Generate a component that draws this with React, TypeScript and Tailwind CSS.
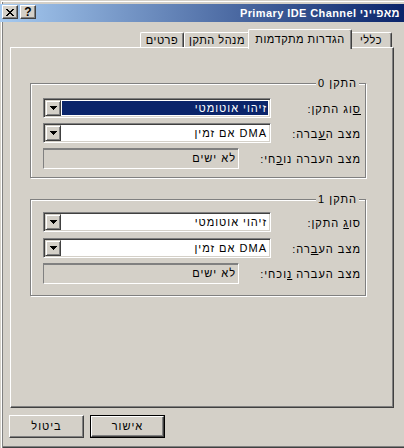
import React from 'react'

// classic win2k dialog, hebrew (rtl) – face #d4d0c8

function DropArrow() {
    return (
        <svg width="7" height="4" viewBox="0 0 7 4" shapeRendering="crispEdges">
            <rect x="0" y="0" width="7" height="1" fill="#000" />
            <rect x="1" y="1" width="5" height="1" fill="#000" />
            <rect x="2" y="2" width="3" height="1" fill="#000" />
            <rect x="3" y="3" width="1" height="1" fill="#000" />
        </svg>
    )
}

function CloseGlyph() {
    const px = [
        [0, 0], [1, 0], [6, 0], [7, 0],
        [1, 1], [2, 1], [5, 1], [6, 1],
        [2, 2], [3, 2], [4, 2], [5, 2],
        [3, 3], [4, 3],
        [2, 4], [3, 4], [4, 4], [5, 4],
        [1, 5], [2, 5], [5, 5], [6, 5],
        [0, 6], [1, 6], [6, 6], [7, 6],
    ]
    return (
        <svg width="8" height="7" viewBox="0 0 8 7" shapeRendering="crispEdges">
            {px.map(([x, y]) => (
                <rect key={`${x}-${y}`} x={x} y={y} width="1" height="1" fill="#000" />
            ))}
        </svg>
    )
}

function CaptionButton({ children }: { children: React.ReactNode }) {
    return (
        <div className="w-[16px] h-[14px] flex items-center justify-center bg-[#d4d0c8] border border-t-white border-l-white border-r-[#404040] border-b-[#404040] shadow-[inset_-1px_-1px_0_#808080]">
            {children}
        </div>
    )
}

function TitleBar() {
    return (
        <div className="h-[18px] flex justify-between bg-[linear-gradient(to_right,#a6caf0,#0a246a)]">
            <div className="flex gap-[2px] pl-[2px] pt-[1px]">
                <CaptionButton>
                    <CloseGlyph />
                </CaptionButton>
                <CaptionButton>
                    <span className="text-[12px] leading-none font-bold tracking-normal">?</span>
                </CaptionButton>
            </div>
            <div dir="rtl" className="pr-[4px] flex items-center text-white font-bold text-[11px] tracking-[0.4px]">
                מאפייני Primary IDE Channel
            </div>
        </div>
    )
}

function Tab({ label, w }: { label: string; w: string }) {
    return (
        <div
            dir="rtl"
            className={`${w} h-[15px] flex items-center justify-center pt-[1px] rounded-t-[2px] border-t border-l border-r border-t-white border-l-white border-r-[#404040] shadow-[inset_-1px_0_0_#808080]`}
        >
            {label}
        </div>
    )
}

function Tabs() {
    return (
        <div className="h-[18px] flex items-end justify-end pr-[2px] tracking-[0.5px]">
            <Tab label="פרטים" w="w-[44px]" />
            <Tab label="מנהל התקן" w="w-[66px]" />
            <div
                dir="rtl"
                className="relative z-10 w-[104px] h-[20px] -mx-[2px] -mb-[2px] bg-[#d4d0c8] flex justify-center pt-[3px] rounded-t-[2px] border-t border-l border-r border-t-white border-l-white border-r-[#404040] shadow-[inset_-1px_0_0_#808080]"
            >
                הגדרות מתקדמות
            </div>
            <Tab label="כללי" w="w-[42px]" />
        </div>
    )
}

function Combo({ value, selected }: { value: string; selected?: boolean }) {
    return (
        <div className="w-[228px] h-[20px] flex p-[1px] bg-white border border-t-[#808080] border-l-[#808080] border-b-white border-r-white shadow-[inset_1px_1px_0_#404040,inset_-1px_-1px_0_#d4d0c8]">
            <div className="w-[16px] h-full flex items-center justify-center bg-[#d4d0c8] border border-t-[#d4d0c8] border-l-[#d4d0c8] border-r-[#404040] border-b-[#404040] shadow-[inset_1px_1px_0_#fff,inset_-1px_-1px_0_#808080]">
                <DropArrow />
            </div>
            <div className="flex-1 flex p-[1px]">
                <div
                    dir="rtl"
                    className={`flex-1 flex items-center px-[1px] ${selected ? 'bg-[#0a246a] text-white' : 'text-black'}`}
                >
                    {value}
                </div>
            </div>
        </div>
    )
}

function ReadOnly({ value }: { value: string }) {
    return (
        <div
            dir="rtl"
            className="w-[196px] h-[21px] flex items-center px-[2px] border border-t-[#808080] border-l-[#808080] border-b-white border-r-white shadow-[inset_0_1px_0_#808080]"
        >
            {value}
        </div>
    )
}

function Row({ label, children, mt }: { label: React.ReactNode; children: React.ReactNode; mt: string }) {
    return (
        <div className={`flex items-center justify-between ${mt}`}>
            {children}
            <div dir="rtl" className="pt-[2px]">
                {label}
            </div>
        </div>
    )
}

function Group({ title, h, pt, children }: { title: string; h: string; pt: string; children: React.ReactNode }) {
    return (
        <div className={`relative w-[336px] ${h} ${pt} pl-[12px] pr-[4px] flex flex-col border border-[#808080] shadow-[1px_1px_0_#fff,inset_1px_1px_0_#fff]`}>
            <span dir="rtl" className="absolute right-[6px] top-[-8px] px-[2px] bg-[#d4d0c8] leading-[14px]">
                {title}
            </span>
            {children}
        </div>
    )
}

export default function App() {
    return (
        <div className="w-[404px] h-[448px] overflow-hidden bg-[#d4d0c8] pt-[4px] flex flex-col font-['Liberation_Sans','DejaVu_Sans',sans-serif] text-[11px] leading-[13px] tracking-[1px] text-black shadow-[inset_1px_1px_0_#d4d0c8,inset_2px_2px_0_#fff,inset_3px_0_0_#808080,inset_0_-1px_0_#404040,inset_0_-2px_0_#808080]">
            <TitleBar />

            {/* tab strip + page */}
            <div className="ml-[10px] mt-[7px] w-[384px]">
                <Tabs />
                <div className="h-[361px] pl-[19px] pt-[35px] flex flex-col border border-t-white border-l-white border-r-[#404040] border-b-[#404040] shadow-[inset_-1px_-1px_0_#808080]">
                    <Group title="התקן 0" h="h-[95px]" pt="pt-[14px]">
                        <Row mt="" label={<><span className="underline">ס</span>וג התקן:</>}>
                            <Combo value="זיהוי אוטומטי" selected />
                        </Row>
                        <Row mt="mt-[5px]" label={<>מצב ה<span className="underline">ע</span>ברה:</>}>
                            <Combo value="DMA אם זמין" />
                        </Row>
                        <Row mt="mt-[5px]" label={<>מצב העברה נו<span className="underline">כ</span>חי:</>}>
                            <ReadOnly value="לא ישים" />
                        </Row>
                    </Group>

                    <div className="mt-[21px]">
                        <Group title="התקן 1" h="h-[97px]" pt="pt-[12px]">
                            <Row mt="" label={<>סו<span className="underline">ג</span> התקן:</>}>
                                <Combo value="זיהוי אוטומטי" />
                            </Row>
                            <Row mt="mt-[6px]" label={<>מצב הע<span className="underline">ב</span>רה:</>}>
                                <Combo value="DMA אם זמין" />
                            </Row>
                            <Row mt="mt-[5px]" label={<>מצב העברה <span className="underline">נ</span>וכחי:</>}>
                                <ReadOnly value="לא ישים" />
                            </Row>
                        </Group>
                    </div>
                </div>
            </div>

            {/* buttons */}
            <div className="flex gap-[6px] ml-[9px] mt-[7px]">
                <div dir="rtl" className="w-[75px] h-[23px] flex items-center justify-center border border-t-white border-l-white border-r-[#404040] border-b-[#404040] shadow-[inset_-1px_-1px_0_#808080]">
                    ביטול
                </div>
                <div className="w-[75px] h-[23px] border border-black">
                    <div dir="rtl" className="h-full flex items-center justify-center border border-t-white border-l-white border-r-[#404040] border-b-[#404040] shadow-[inset_-1px_-1px_0_#808080]">
                        אישור
                    </div>
                </div>
            </div>
        </div>
    )
}
